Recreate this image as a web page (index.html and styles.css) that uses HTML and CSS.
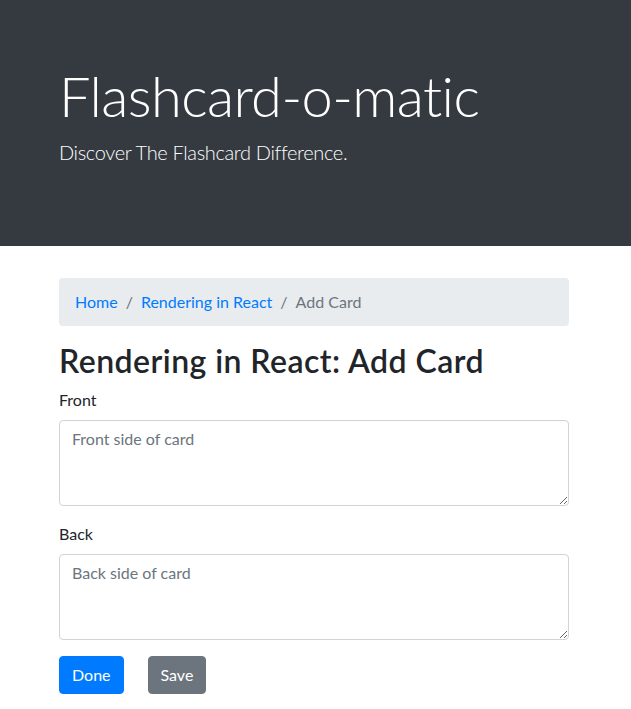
FILE: index.html
```html
<!DOCTYPE html>
<html lang="en">
<head>
<meta charset="utf-8">
<title>Flashcard-o-matic</title>
<link rel="stylesheet" href="styles.css">
</head>
<body>
<header class="jumbotron">
  <div class="container">
    <h1 class="display">Flashcard-o-matic</h1>
    <p class="lead">Discover The Flashcard Difference.</p>
  </div>
</header>
<main class="container">
  <nav>
    <ol class="breadcrumb">
      <li class="crumb"><a href="#">Home</a></li>
      <li class="crumb"><a href="#">Rendering in React</a></li>
      <li class="crumb active">Add Card</li>
    </ol>
  </nav>
  <h2 class="title">Rendering in React: Add Card</h2>
  <form>
    <div class="form-group">
      <label class="label" for="front">Front</label>
      <textarea class="control" id="front" rows="3" placeholder="Front side of card"></textarea>
    </div>
    <div class="form-group">
      <label class="label" for="back">Back</label>
      <textarea class="control" id="back" rows="3" placeholder="Back side of card"></textarea>
    </div>
    <div class="actions">
      <button type="button" class="btn btn-primary">Done</button>
      <button type="submit" class="btn btn-secondary">Save</button>
    </div>
  </form>
</main>
</body>
</html>
```
FILE: styles.css
```css
* { box-sizing: border-box; }
html, body { margin: 0; }
body {
  font-family: Lato, "Open Sans", sans-serif;
  font-size: 16px;
  line-height: 1.5;
  color: #212529;
  background: #fff;
}
.container {
  width: 540px;
  margin: 0 auto 0 calc(50% - 271.5px);
  padding: 0 15px;
}
.jumbotron {
  background: #343a40;
  color: #fff;
  padding: 62px 0 62.8px;
  margin-bottom: 32px;
}
.display {
  margin: 0 0 8px;
  font-size: 56px;
  font-weight: 300;
  line-height: 1.2;
  letter-spacing: -0.6px;
}
.lead {
  margin: 0 0 16px;
  font-size: 20px;
  font-weight: 300;
  line-height: 1.5;
  letter-spacing: -0.35px;
}
.breadcrumb {
  display: flex;
  list-style: none;
  margin: 0 0 16px;
  padding: 12px 16px;
  background: #e9ecef;
  border-radius: 4px;
}
.crumb + .crumb { padding-left: 8px; }
.crumb + .crumb::before {
  content: "/";
  color: #6c757d;
  padding-right: 8px;
}
.crumb a { color: #007bff; text-decoration: none; }
.crumb.active { color: #6c757d; }
.title {
  margin: 0 0 8px;
  font-size: 32px;
  font-weight: 600;
  line-height: 1.2;
  letter-spacing: 0.45px;
}
.form-group { margin-bottom: 16px; }
.label {
  display: inline-block;
  margin-bottom: 8px;
}
.control {
  display: block;
  width: 100%;
  height: 86px;
  padding: 6px 12px;
  font: inherit;
  color: #495057;
  border: 1px solid #ced4da;
  border-radius: 4px;
  resize: vertical;
}
.control::placeholder { color: #6c757d; opacity: 1; }
.actions { display: flex; gap: 24px; }
.btn {
  font: inherit;
  line-height: 1.5;
  padding: 6px 12px;
  border: 1px solid transparent;
  border-radius: 4px;
  color: #fff;
}
.btn-primary { background: #007bff; border-color: #007bff; }
.btn-secondary { background: #6c757d; border-color: #6c757d; }
```
